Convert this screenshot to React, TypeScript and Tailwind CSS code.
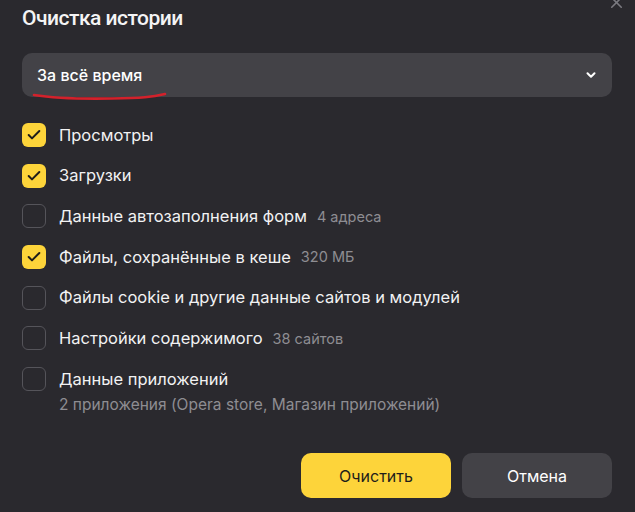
import { Check, ChevronDown, X } from "lucide-react";

interface RowProps {
  label: string;
  hint?: string;
  sub?: string;
  checked?: boolean;
}

function Row({ label, hint, sub, checked }: RowProps) {
  return (
    <div className="flex gap-[13px]">
      <div
        className={`w-6 h-6 shrink-0 rounded-[6px] flex items-center justify-center ${
          checked ? "bg-[#fdd43a]" : "border-[1.5px] border-[#55545a]"
        }`}
      >
        {checked && <Check size={16} strokeWidth={3} className="text-[#1f1d1a]" />}
      </div>
      <div className="flex flex-col">
        <div className="h-6 flex items-center gap-[10px]">
          <span className="text-[16.5px] text-[#f2f2f3]">{label}</span>
          {hint && <span className="text-[14.5px] text-[#8e8d92]">{hint}</span>}
        </div>
        {sub && <span className="text-[15.5px] text-[#8e8d92] mt-[2px]">{sub}</span>}
      </div>
    </div>
  );
}

export default function App() {
  return (
    <div
      className="relative w-[635px] h-[512px] bg-[#2a292e] overflow-hidden px-[22px]"
      style={{ fontFamily: "Inter, 'Noto Sans', sans-serif" }}
    >
      <X size={19} strokeWidth={2} className="absolute right-[9px] top-[-7px] text-[#7b7a80]" />
      <h1
        className="pt-[2px] text-[21px] font-medium text-[#f4f4f5] leading-[32px] tracking-[-0.5px]"
        style={{ fontFamily: "Roboto, Inter, sans-serif" }}
      >
        Очистка истории
      </h1>

      <div className="relative mt-[19px] h-[44px] w-[590px] rounded-[10px] bg-[#434247] flex items-center justify-between pl-[15px] pr-[14px]">
        <span className="text-[16px] font-medium text-white">За всё время</span>
        <ChevronDown size={14} strokeWidth={3.5} className="text-white" />
        <svg
          className="absolute left-[10px] top-[39px]"
          width="136"
          height="10"
          viewBox="0 0 136 10"
        >
          <path
            d="M2 3 C 20 6, 50 7, 80 6.5 S 120 5, 133 2"
            fill="none"
            stroke="#d3212b"
            strokeWidth="2.6"
            strokeLinecap="round"
          />
        </svg>
      </div>

      <div className="mt-[26px] flex flex-col gap-[16.7px]">
        <Row label="Просмотры" checked />
        <Row label="Загрузки" checked />
        <Row label="Данные автозаполнения форм" hint="4 адреса" />
        <Row label="Файлы, сохранённые в кеше" hint="320 МБ" checked />
        <Row label="Файлы cookie и другие данные сайтов и модулей" />
        <Row label="Настройки содержимого" hint="38 сайтов" />
        <Row
          label="Данные приложений"
          sub="2 приложения (Opera store, Магазин приложений)"
        />
      </div>

      <div className="absolute bottom-[14px] right-[23px] flex gap-[11px]">
        <button className="w-[150px] h-[45px] rounded-[10px] bg-[#fdd43a] text-[16px] text-[#1f1d1a]">
          Очистить
        </button>
        <button className="w-[150px] h-[45px] rounded-[10px] bg-[#434247] text-[16px] text-white">
          Отмена
        </button>
      </div>
    </div>
  );
}
